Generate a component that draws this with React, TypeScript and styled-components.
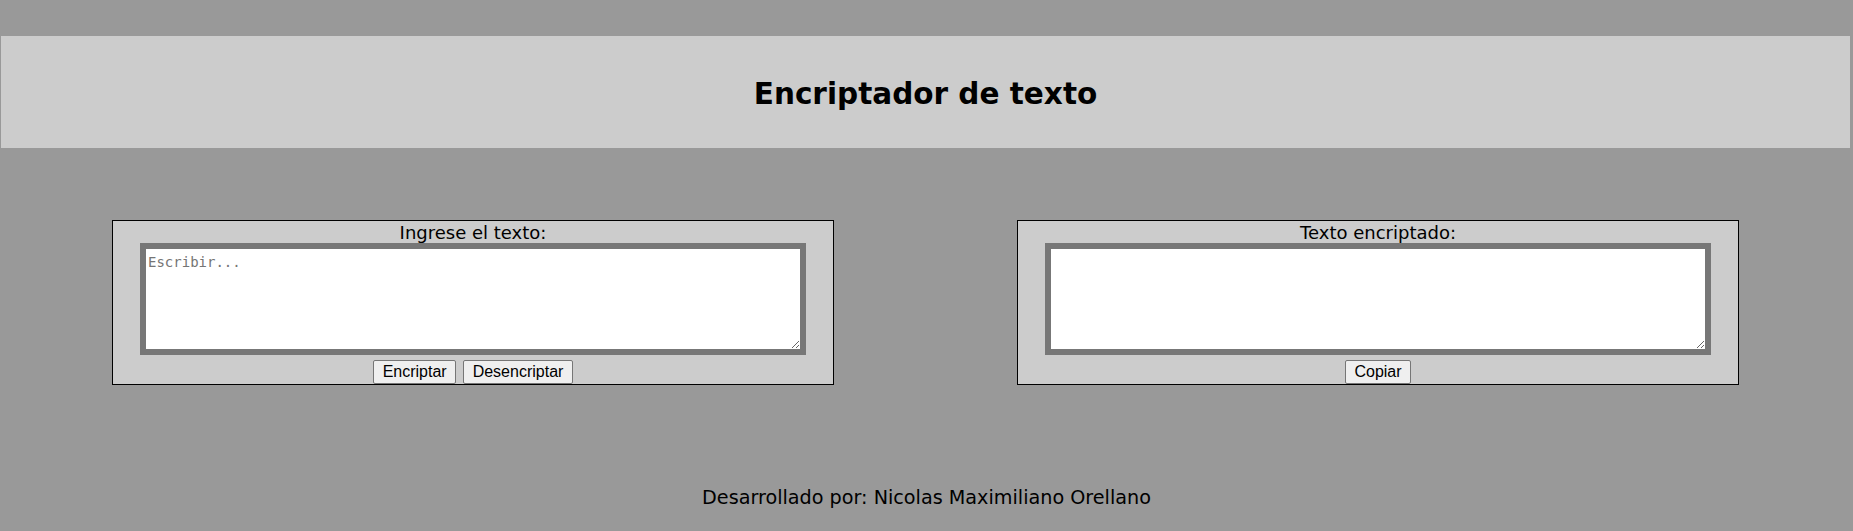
import { createGlobalStyle, styled } from 'styled-components';

const GlobalStyle = createGlobalStyle`
  body {
    margin: 0;
    background-color: #999999;
    font-family: 'DejaVu Sans', Verdana, sans-serif;
    font-size: 18px;
    color: #000000;
  }
`;

type PanelProps = {
  label: string;
  placeholder?: string;
  actions: string[];
};

function Panel({ label, placeholder, actions }: PanelProps) {
  return (
    <S.Panel>
      <S.Label>{label}</S.Label>
      <S.TextBox placeholder={placeholder} />
      <S.Actions>
        {actions.map((action) => (
          <S.Button key={action}>{action}</S.Button>
        ))}
      </S.Actions>
    </S.Panel>
  );
}

export default function App() {
  return (
    <>
      <GlobalStyle />
      <S.Header>
        <S.Title>Encriptador de texto</S.Title>
      </S.Header>
      <S.Main>
        <Panel
          label="Ingrese el texto:"
          placeholder="Escribir..."
          actions={['Encriptar', 'Desencriptar']}
        />
        <Panel label="Texto encriptado:" actions={['Copiar']} />
      </S.Main>
      <S.Footer>Desarrollado por: Nicolas Maximiliano Orellano</S.Footer>
    </>
  );
}

const S = {
  Header: styled.header`
    margin: 36px 3px 0 1px;
    height: 112px;
    background-color: #cccccc;
    display: flex;
    align-items: center;
    justify-content: center;
  `,
  Title: styled.h1`
    margin: 0;
    padding-top: 4px;
    font-size: 29.5px;
    font-weight: bold;
  `,
  Main: styled.main`
    display: flex;
    gap: 183px;
    padding: 72px 0 0 112px;
  `,
  Panel: styled.section`
    box-sizing: border-box;
    width: 722px;
    height: 165px;
    border: 1px solid #000000;
    background-color: #cccccc;
    display: flex;
    flex-direction: column;
    align-items: center;
  `,
  Label: styled.p`
    margin: 1px 0 0;
    line-height: 21px;
  `,
  TextBox: styled.textarea`
    display: block;
    box-sizing: border-box;
    width: 666px;
    height: 112px;
    margin: 0;
    padding: 5px 2px 2px;
    border: 6px solid #777777;
    background-color: #ffffff;
    font-family: 'DejaVu Sans Mono', monospace;
    font-size: 14px;
    resize: both;
    outline: none;
    &::placeholder {
      color: #757575;
    }
  `,
  Actions: styled.div`
    display: flex;
    gap: 7px;
    margin-top: 5px;
  `,
  Button: styled.button`
    box-sizing: border-box;
    height: 24px;
    padding: 1px 8.5px;
    border: 1px solid #767676;
    border-radius: 2px;
    background-color: #efefef;
    color: #000000;
    font-family: 'Liberation Sans', Arial, sans-serif;
    font-size: 16px;
    cursor: pointer;
  `,
  Footer: styled.footer`
    margin-top: 102px;
    text-align: center;
    font-size: 19.2px;
    line-height: 22px;
  `,
};
